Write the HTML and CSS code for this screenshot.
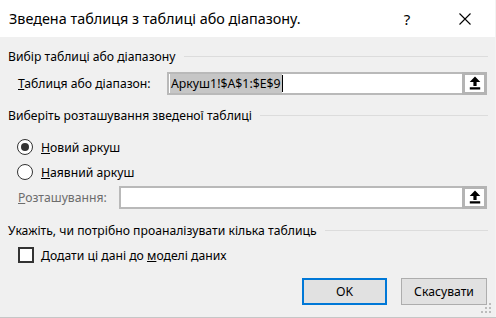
FILE: index.html
```html
<!DOCTYPE html>
<html lang="uk">
<head>
    <meta charset="UTF-8">
    <title>Зведена таблиця з таблиці або діапазону</title>
    <link rel="stylesheet" href="styles.css">
</head>
<body>

<div class="dialog">
    <div class="titlebar">
        <span class="title">Зведена таблиця з таблиці або діапазону.</span>
        <span class="help">?</span>
        <span class="close">
            <svg width="12" height="12" viewBox="0 0 12 12"><path d="M0.5 0.5 L11.5 11.5 M11.5 0.5 L0.5 11.5" stroke="#000" stroke-width="1.1" fill="none"/></svg>
        </span>
    </div>

    <div class="content">
        <div class="group group-first"><span>Вибір таблиці або діапазону</span></div>
        <div class="field">
            <label class="label label-wide"><u>Т</u>аблиця або діапазон:</label>
            <div class="input"><span class="selected">Аркуш1!$A$1:$E$9</span><span class="caret"></span></div>
            <button class="pick">
                <svg width="18" height="17" viewBox="0 0 18 17"><path d="M9 1.5 L14.3 7 L10.6 7 L10.6 11 L7.4 11 L7.4 7 L3.7 7 Z M3.8 12.3 H14.2 V14.4 H3.8 Z" fill="#000"/></svg>
            </button>
        </div>

        <div class="group group-second"><span>Виберіть розташування зведеної таблиці</span></div>
        <div class="option option-first">
            <span class="radio checked"></span>
            <span><u>Н</u>овий аркуш</span>
        </div>
        <div class="option option-second">
            <span class="radio"></span>
            <span><u>Н</u>аявний аркуш</span>
        </div>
        <div class="field field-location">
            <label class="label label-narrow disabled"><u>Р</u>озташування:</label>
            <div class="input"></div>
            <button class="pick">
                <svg width="18" height="17" viewBox="0 0 18 17"><path d="M9 1.5 L14.3 7 L10.6 7 L10.6 11 L7.4 11 L7.4 7 L3.7 7 Z M3.8 12.3 H14.2 V14.4 H3.8 Z" fill="#000"/></svg>
            </button>
        </div>

        <div class="group group-third"><span>Укажіть, чи потрібно проаналізувати кілька таблиць</span></div>
        <div class="option option-check">
            <span class="checkbox"></span>
            <span>Додати ці дані до <u>м</u>оделі даних</span>
        </div>

        <div class="buttons">
            <button class="btn btn-default">OK</button>
            <button class="btn">Скасувати</button>
        </div>
    </div>

    <svg class="grip" width="13" height="11" viewBox="0 0 13 11">
        <rect x="9" y="0" width="2" height="2" fill="#bcbcbc"/>
        <rect x="5" y="4" width="2" height="2" fill="#bcbcbc"/>
        <rect x="9" y="4" width="2" height="2" fill="#bcbcbc"/>
        <rect x="1" y="8" width="2" height="2" fill="#bcbcbc"/>
        <rect x="5" y="8" width="2" height="2" fill="#bcbcbc"/>
        <rect x="9" y="8" width="2" height="2" fill="#bcbcbc"/>
    </svg>
</div>
<div class="sheet-edge"></div>

</body>
</html>
```

FILE: styles.css
```css
body {
    margin: 0;
    background-color: #f3f3f3;
    font-family: "Noto Sans", "Open Sans", sans-serif;
    font-size: 12.2px;
    color: #000;
}
.dialog {
    position: relative;
    width: 495px;
    height: 317px;
    background-color: #f0f0f0;
}
.titlebar {
    display: flex;
    align-items: center;
    height: 37px;
    background-color: #fff;
}
.title {
    padding-left: 9px;
    font-size: 14.4px;
}
.help {
    margin-left: auto;
    width: 16px;
    text-align: center;
    font-size: 15px;
}
.close {
    display: flex;
    justify-content: center;
    width: 16px;
    margin-left: 42px;
    margin-right: 22px;
}
.content {
    padding: 0 8px;
}
.group {
    display: flex;
    align-items: center;
    height: 20px;
}
.group::after {
    content: "";
    flex: 1;
    height: 1px;
    margin-left: 8px;
    margin-right: -1px;
    background-color: #dcdcdc;
}
.group-first {
    margin-top: 9px;
}
.group-second {
    margin-top: 10px;
}
.group-third {
    margin-top: 11px;
}
.field {
    display: flex;
    align-items: center;
    height: 23px;
    margin-top: 6px;
    padding-left: 10px;
}
.field-location {
    margin-top: 4px;
}
.label-wide {
    width: 149px;
}
.label-narrow {
    width: 101px;
}
.disabled {
    color: #6d6d6d;
}
.input {
    flex: 1;
    display: flex;
    align-items: center;
    height: 23px;
    box-sizing: border-box;
    border: 2px solid #b9b9b9;
    border-right: none;
    background-color: #fff;
    padding-left: 1px;
    font-size: 12.3px;
}
.selected {
    background-color: #c6c6c6;
    line-height: 19px;
    padding: 0 1px;
}
.caret {
    width: 1px;
    height: 17px;
    background-color: #000;
}
.pick {
    display: flex;
    align-items: center;
    justify-content: center;
    width: 25px;
    height: 23px;
    padding: 0;
    box-sizing: border-box;
    border: 3px solid #b4b4b4;
    background-color: #fff;
}
.option {
    display: flex;
    align-items: center;
    height: 20px;
    padding-left: 9px;
}
.option-first {
    margin-top: 12px;
}
.option-second {
    margin-top: 5px;
}
.option-check {
    margin-top: 5px;
    padding-left: 10px;
}
.radio {
    display: flex;
    align-items: center;
    justify-content: center;
    width: 16px;
    height: 16px;
    box-sizing: border-box;
    border: 1px solid #333;
    border-radius: 50%;
    margin-right: 8px;
    background-color: #fff;
}
.radio.checked::after {
    content: "";
    width: 8px;
    height: 8px;
    border-radius: 50%;
    background-color: #333;
}
.checkbox {
    width: 16px;
    height: 16px;
    box-sizing: border-box;
    border: 2px solid #333;
    margin-right: 7px;
    background-color: #fff;
}
.buttons {
    display: flex;
    justify-content: flex-end;
    gap: 14px;
    margin-top: 13px;
}
.btn {
    width: 86px;
    height: 27px;
    box-sizing: border-box;
    border: 1px solid #adadad;
    background-color: #e1e1e1;
    font-family: inherit;
    font-size: 12.2px;
    color: #000;
}
.btn-default {
    width: 85px;
    border: 2px solid #0078d7;
}
.grip {
    position: absolute;
    right: 2px;
    bottom: 3px;
}
.sheet-edge {
    height: 1px;
    background-color: #c6c6c6;
}
```
